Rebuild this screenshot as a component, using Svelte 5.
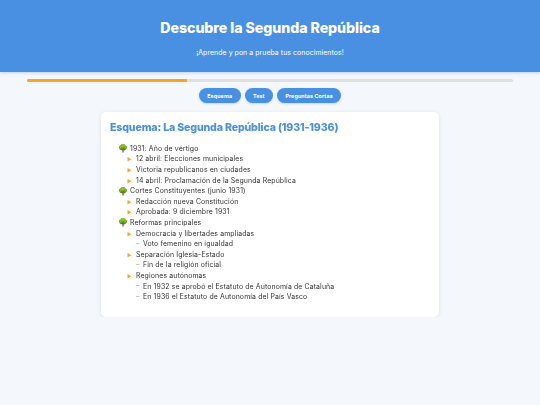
<script lang="ts">
  type Item = { text: string; children?: Item[] };

  const outline: Item[] = [
    {
      text: "1931: Año de vértigo",
      children: [
        { text: "12 abril: Elecciones municipales" },
        { text: "Victoria republicanos en ciudades" },
        { text: "14 abril: Proclamación de la Segunda República" },
      ],
    },
    {
      text: "Cortes Constituyentes (junio 1931)",
      children: [
        { text: "Redacción nueva Constitución" },
        { text: "Aprobada: 9 diciembre 1931" },
      ],
    },
    {
      text: "Reformas principales",
      children: [
        {
          text: "Democracia y libertades ampliadas",
          children: [{ text: "Voto femenino en igualdad" }],
        },
        {
          text: "Separación Iglesia-Estado",
          children: [{ text: "Fin de la religión oficial" }],
        },
        {
          text: "Regiones autónomas",
          children: [
            { text: "En 1932 se aprobó el Estatuto de Autonomía de Cataluña" },
            { text: "En 1936 el Estatuto de Autonomía del País Vasco" },
          ],
        },
      ],
    },
  ];

  const tabs = ["Esquema", "Test", "Preguntas Cortas"];
</script>

<header class="hero">
  <h1>Descubre la Segunda República</h1>
  <p>¡Aprende y pon a prueba tus conocimientos!</p>
</header>

<div class="progress"><div class="fill"></div></div>

<nav class="tabs">
  {#each tabs as tab}
    <button>{tab}</button>
  {/each}
</nav>

<main class="card">
  <h2>Esquema: La Segunda República (1931-1936)</h2>
  <ul class="outline">
    {#each outline as top}
      <li class="top">
        <div class="row"><span class="tree">🌳</span><span>{top.text}</span></div>
        <ul>
          {#each top.children ?? [] as mid}
            <li class="mid">
              <div class="row"><span class="arrow">►</span><span>{mid.text}</span></div>
              {#if mid.children}
                <ul>
                  {#each mid.children as leaf}
                    <li class="row"><span class="dash">–</span><span>{leaf.text}</span></li>
                  {/each}
                </ul>
              {/if}
            </li>
          {/each}
        </ul>
      </li>
    {/each}
  </ul>
</main>

<style>
  :global(body) {
    margin: 0;
    background: #f4f7fc;
    font-family: Inter, "Open Sans", sans-serif;
    color: #333;
  }

  .hero {
    height: 72px;
    box-sizing: border-box;
    padding-top: 19px;
    background: #4a90e2;
    color: #fff;
    text-align: center;
    box-shadow: 0 1px 3px rgba(74, 144, 226, 0.35);
  }

  h1 {
    margin: 0;
    font-size: 14.2px;
    line-height: 17px;
    font-weight: 800;
    letter-spacing: -0.07px;
  }

  .hero p {
    margin: 12px 0 0;
    font-size: 6.9px;
    line-height: 9px;
    letter-spacing: 0.08px;
  }

  .progress {
    width: 486px;
    height: 3px;
    margin: 7px auto 0;
    border-radius: 2px;
    background: #e0e0e0;
    overflow: hidden;
  }

  .fill {
    width: 33%;
    height: 100%;
    background: #f5a623;
  }

  .tabs {
    display: flex;
    justify-content: center;
    gap: 4px;
    margin-top: 6px;
  }

  .tabs button {
    height: 15px;
    padding: 0 8.4px;
    border: none;
    border-radius: 8px;
    background: #4a90e2;
    color: #fff;
    font: 700 5.4px Inter, sans-serif;
    letter-spacing: 0.08px;
    box-shadow: 0 1px 2px rgba(74, 144, 226, 0.3);
  }

  .card {
    width: 338px;
    height: 205px;
    box-sizing: border-box;
    margin: 9px auto 0;
    padding: 9px;
    border-radius: 5px;
    background: #fff;
    box-shadow: 0 1px 5px rgba(0, 0, 0, 0.09);
    will-change: transform;
  }

  h2 {
    margin: 0;
    font-size: 10.6px;
    line-height: 14px;
    font-weight: 800;
    letter-spacing: -0.15px;
    color: #4a90e2;
  }

  ul {
    list-style: none;
    margin: 0;
    padding: 0;
  }

  .outline {
    margin-top: 8px;
    padding-left: 8px;
    font-size: 6.9px;
    letter-spacing: 0.13px;
  }

  .row {
    display: flex;
    align-items: center;
    height: 10.6px;
    white-space: nowrap;
  }

  .top > ul {
    padding-left: 9px;
  }

  .mid > ul {
    padding-left: 9px;
  }

  .tree {
    width: 12px;
    flex: none;
    font-size: 8px;
    line-height: 1;
  }

  .arrow {
    width: 9px;
    flex: none;
    margin-top: 2px;
    font-size: 5px;
    line-height: 1;
    color: #f5a623;
  }

  .dash {
    width: 7px;
    flex: none;
    margin-top: 1px;
    line-height: 1;
    color: #999;
  }
</style>
